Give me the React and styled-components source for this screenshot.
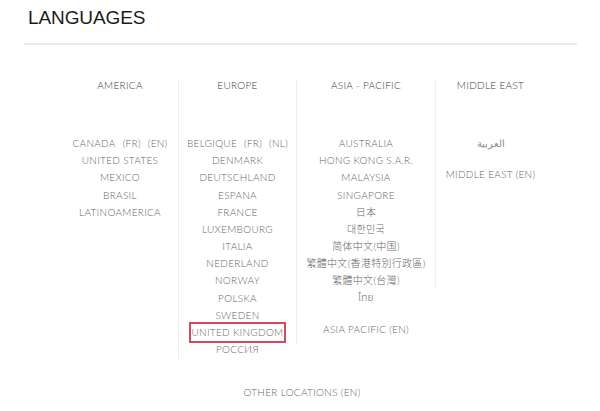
import React from "react";
import styled, { createGlobalStyle } from "styled-components";

const Global = createGlobalStyle`
  html, body { margin: 0; padding: 0; background: #fff; }
  body { font-family: Lato, "Noto Sans CJK SC", "DejaVu Sans", sans-serif; }
`;

const Page = styled.div`
  width: 600px;
  height: 411px;
  overflow: hidden;
  padding-top: 7px;
  box-sizing: border-box;
`;

const Title = styled.h1`
  margin: 0 0 0 28px;
  font-family: "Liberation Sans", Arial, sans-serif;
  font-weight: normal;
  font-size: 19px;
  line-height: 21px;
  color: #1c1c1c;
  letter-spacing: -0.1px;
`;

const Rule = styled.hr`
  margin: 15px 23px 0 24px;
  border: 0;
  height: 2px;
  background: #e8e8e8;
`;

const Grid = styled.div`
  display: grid;
  grid-template-columns: 116px 118px 139px 110px;
  margin: 34px 0 0 62px;
  align-items: start;
`;

const Column = styled.div`
  height: ${(p) => p.$h}px;
  border-left: ${(p) => (p.$ruled ? "1px solid #eeeeee" : "0")};
  box-sizing: border-box;
  text-align: center;
  font-size: 10px;
  font-weight: 300;
  letter-spacing: 0.3px;
`;

const Heading = styled.div`
  line-height: 12px;
  color: #3c3c3c;
  margin-bottom: 44px;
`;

const List = styled.div`
  margin-top: ${(p) => (p.$sep ? 14 : 0)}px;
  color: #666666;
  line-height: 17.17px;
`;

const Item = styled.div`
  white-space: nowrap;
  color: ${(p) => (p.$script === "ar" ? "#8a8a8a" : "inherit")};
  font-weight: ${(p) => (p.$script === "ar" ? 200 : 300)};
  font-family: ${(p) =>
    p.$script === "ar"
      ? '"DejaVu Sans", sans-serif'
      : p.$script === "th"
      ? '"Noto Sans Thai", "DejaVu Sans", sans-serif'
      : p.$script === "tc"
      ? 'Lato, "Noto Sans CJK TC", sans-serif'
      : p.$script === "kr"
      ? 'Lato, "Noto Sans CJK KR", sans-serif'
      : p.$script === "jp"
      ? 'Lato, "Noto Sans CJK JP", sans-serif'
      : 'Lato, "Noto Sans CJK SC", "DejaVu Sans", sans-serif'};
`;

const Link = styled.span`
  & + & {
    margin-left: 7px;
  }
`;

const Highlight = styled.span`
  display: inline-block;
  padding: 0 1px;
  outline: 2px solid #d6485b;
`;

const Footer = styled.div`
  margin-top: 24px;
  text-align: center;
  padding-left: 4px;
  font-size: 10px;
  font-weight: 300;
  letter-spacing: 0.3px;
  line-height: 17px;
  color: #666666;
`;

export default function App() {
  return (
    <Page>
      <Global />
      <Title>LANGUAGES</Title>
      <Rule />
      <Grid>
        <Column $h={140}>
          <Heading>AMERICA</Heading>
          <List>
            <Item>
              <Link>CANADA</Link>
              <Link>(FR)</Link>
              <Link>(EN)</Link>
            </Item>
            <Item>UNITED STATES</Item>
            <Item>MEXICO</Item>
            <Item>BRASIL</Item>
            <Item>LATINOAMERICA</Item>
          </List>
        </Column>
        <Column $ruled $h={281}>
          <Heading>EUROPE</Heading>
          <List>
            <Item>
              <Link>BELGIQUE</Link>
              <Link>(FR)</Link>
              <Link>(NL)</Link>
            </Item>
            <Item>DENMARK</Item>
            <Item>DEUTSCHLAND</Item>
            <Item>ESPANA</Item>
            <Item>FRANCE</Item>
            <Item>LUXEMBOURG</Item>
            <Item>ITALIA</Item>
            <Item>NEDERLAND</Item>
            <Item>NORWAY</Item>
            <Item>POLSKA</Item>
            <Item>SWEDEN</Item>
            <Item>
              <Highlight>UNITED KINGDOM</Highlight>
            </Item>
            <Item>РОССИЯ</Item>
          </List>
        </Column>
        <Column $ruled $h={266}>
          <Heading>ASIA - PACIFIC</Heading>
          <List>
            <Item>AUSTRALIA</Item>
            <Item>HONG KONG S.A.R.</Item>
            <Item>MALAYSIA</Item>
            <Item>SINGAPORE</Item>
            <Item $script="jp">日本</Item>
            <Item $script="kr">대한민국</Item>
            <Item>简体中文(中国)</Item>
            <Item $script="tc">繁體中文(香港特別行政區)</Item>
            <Item $script="tc">繁體中文(台灣)</Item>
            <Item $script="th">ไทย</Item>
          </List>
          <List $sep>
            <Item>ASIA PACIFIC (EN)</Item>
          </List>
        </Column>
        <Column $ruled $h={209}>
          <Heading>MIDDLE EAST</Heading>
          <List>
            <Item $script="ar">العربية</Item>
          </List>
          <List $sep>
            <Item>MIDDLE EAST (EN)</Item>
          </List>
        </Column>
      </Grid>
      <Footer>OTHER LOCATIONS (EN)</Footer>
    </Page>
  );
}
